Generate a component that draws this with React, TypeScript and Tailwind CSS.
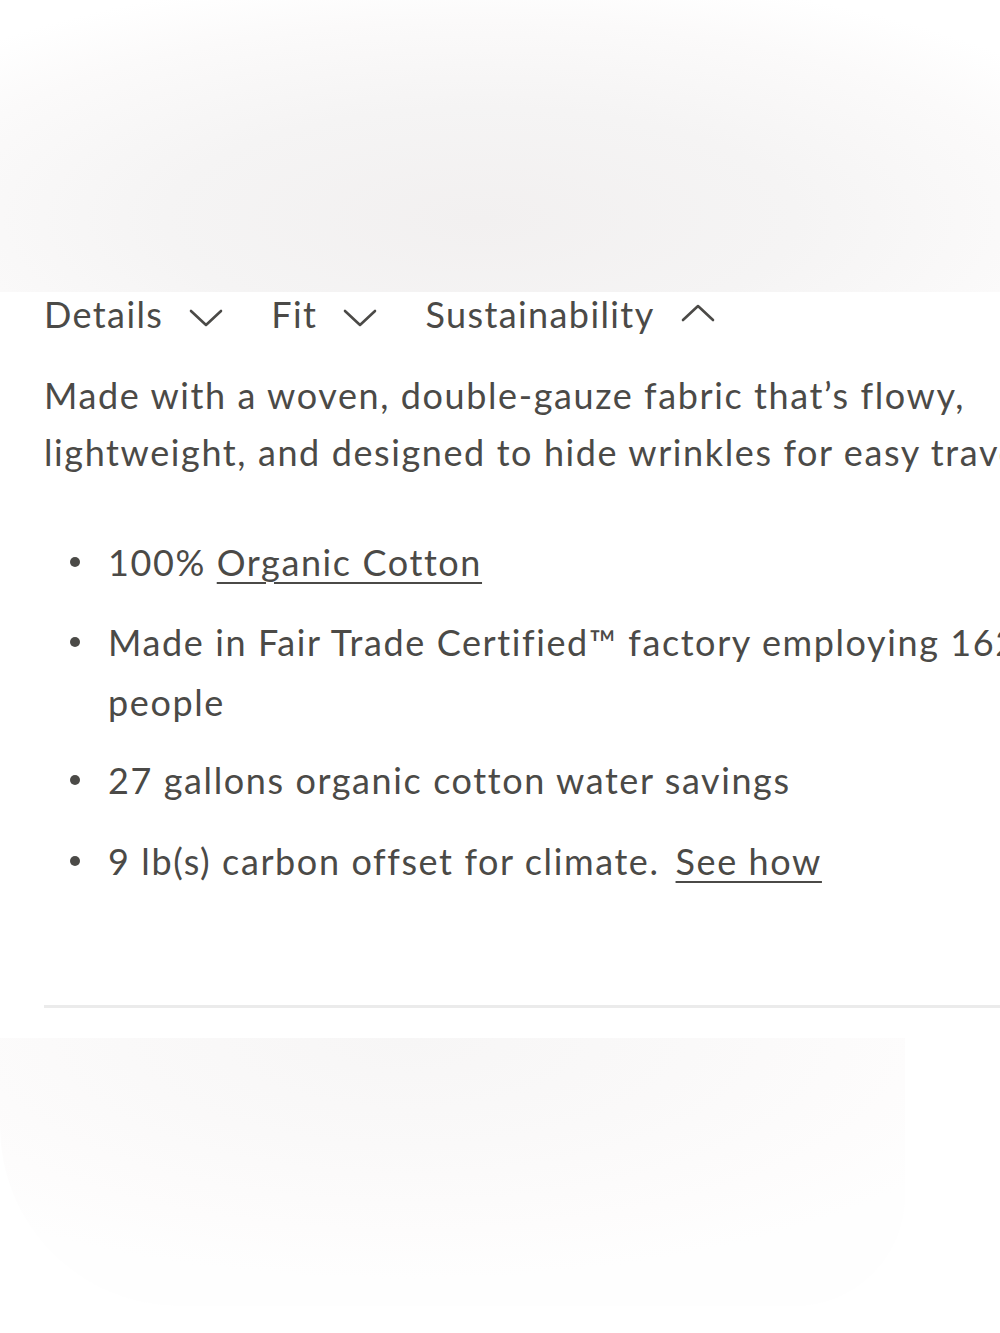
import React from "react";

function Chevron({ up = false }: { up?: boolean }) {
  return (
    <svg width="34" height="18" viewBox="0 0 34 18" fill="none" className="shrink-0">
      <polyline
        points={up ? "2,16 17,2 32,16" : "2,2 17,16 32,2"}
        stroke="#4b4a47"
        strokeWidth="2.6"
        strokeLinecap="round"
        strokeLinejoin="round"
      />
    </svg>
  );
}

function Tab({ label, open = false }: { label: string; open?: boolean }) {
  return (
    <button className="flex items-center gap-[26px] text-[#4b4a47] tracking-[1.4px]">
      <span>{label}</span>
      <span className={open ? "mt-[-4px]" : "mt-[6px]"}>
        <Chevron up={open} />
      </span>
    </button>
  );
}

function Bullet({ children }: { children: React.ReactNode }) {
  return (
    <li className="flex">
      <span className="w-[64px] shrink-0 flex items-start pt-[25px] pl-[26px]">
        <span className="w-[10px] h-[10px] rounded-full bg-[#4b4a47]" />
      </span>
      <span>{children}</span>
    </li>
  );
}

export default function App() {
  return (
    <div
      className="w-[1000px] min-h-[1333px] overflow-hidden bg-white text-[#4b4a47]"
      style={{ fontFamily: "Lato, 'Open Sans', sans-serif" }}
    >
      <div className="h-[292px] w-full bg-[radial-gradient(ellipse_70%_85%_at_48%_75%,#f2f0f0_0%,#f5f4f4_45%,#fbfafa_80%,#ffffff_100%)]" />

      <div className="w-[1080px] pl-[44px] text-[36px] tracking-[1.6px]">
        <div className="flex items-center gap-[48px] h-[45px] leading-[45px]">
          <Tab label="Details" />
          <Tab label="Fit" />
          <Tab label="Sustainability" open />
        </div>

        <p className="mt-[30px] leading-[57px]">
          Made with a woven, double-gauze fabric that’s flowy, lightweight, and designed to hide wrinkles for easy travel.
        </p>

        <ul className="mt-[51px] leading-[60px]">
          <Bullet>
            100%{" "}
            <a href="#" className="underline underline-offset-[6px] decoration-2">Organic Cotton</a>
          </Bullet>
          <div className="h-[20px]" />
          <Bullet>Made in Fair Trade Certified™ factory employing 1622 people</Bullet>
          <div className="h-[18px]" />
          <Bullet>27 gallons organic cotton water savings</Bullet>
          <div className="h-[21px]" />
          <Bullet>
            9 lb(s) carbon offset for climate.
            <a href="#" className="ml-[16px] underline underline-offset-[6px] decoration-2">See how</a>
          </Bullet>
        </ul>

        <div className="mt-[114px] h-[3px] bg-[#ebebeb]" />
      </div>

      <div className="mt-[30px] h-[268px] w-[905px] rounded-bl-[180px] rounded-br-[110px] bg-[radial-gradient(ellipse_70%_90%_at_45%_0%,#f7f6f6_0%,#faf9f9_45%,#fdfcfc_80%,#fefefe_100%)]" />
    </div>
  );
}
